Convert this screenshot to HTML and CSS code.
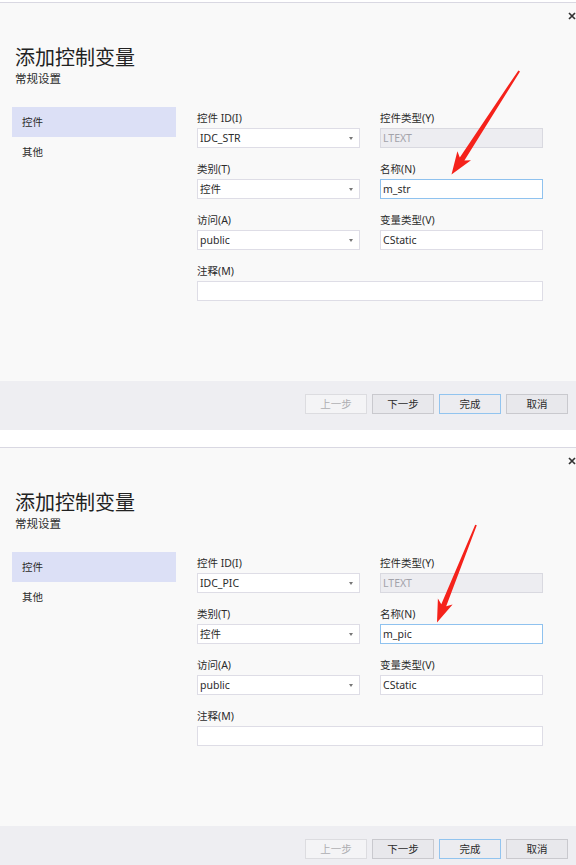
FILE: index.html
```html
<!DOCTYPE html>
<html lang="zh-CN">
<head>
<meta charset="utf-8">
<title>添加控制变量</title>
<link rel="stylesheet" href="styles.css">
</head>
<body>
<div class="shot">
  <div class="dialog">
    <div class="titlebar">
      <span class="close"><svg width="8" height="8" viewBox="0 0 8 8"><path d="M1 1L7 7M7 1L1 7" stroke="#333" stroke-width="1.7"/></svg></span>
    </div>
    <header class="head">
      <h1 class="title">添加控制变量</h1>
      <p class="subtitle">常规设置</p>
    </header>
    <div class="body">
      <nav class="side">
        <div class="nav-item active">控件</div>
        <div class="nav-item">其他</div>
      </nav>
      <div class="form">
        <div class="field">
          <div class="label">控件 ID(I)</div>
          <div class="box select"><span>IDC_STR</span><i class="caret"></i></div>
        </div>
        <div class="field">
          <div class="label">控件类型(Y)</div>
          <div class="box disabled"><span>LTEXT</span></div>
        </div>
        <div class="field">
          <div class="label">类别(T)</div>
          <div class="box select"><span>控件</span><i class="caret"></i></div>
        </div>
        <div class="field">
          <div class="label">名称(N)</div>
          <div class="box focused"><span>m_str</span></div>
        </div>
        <div class="field">
          <div class="label">访问(A)</div>
          <div class="box select"><span>public</span><i class="caret"></i></div>
        </div>
        <div class="field">
          <div class="label">变量类型(V)</div>
          <div class="box"><span>CStatic</span></div>
        </div>
        <div class="field wide">
          <div class="label">注释(M)</div>
          <div class="box"></div>
        </div>
      </div>
    </div>
  </div>
  <footer class="footer">
    <button class="btn disabled">上一步</button>
    <button class="btn">下一步</button>
    <button class="btn primary">完成</button>
    <button class="btn">取消</button>
  </footer>
  <svg class="arrow" width="576" height="445" viewBox="0 0 576 445">
    <path d="M520,71.4 L464.4,160.6 L471,160.2 L451.5,174.5 L457.4,151.2 L459.8,157.4 L518.4,70.4 Z" fill="#f5221b"/>
  </svg>
</div>

<div class="shot">
  <div class="dialog">
    <div class="titlebar">
      <span class="close"><svg width="8" height="8" viewBox="0 0 8 8"><path d="M1 1L7 7M7 1L1 7" stroke="#333" stroke-width="1.7"/></svg></span>
    </div>
    <header class="head">
      <h1 class="title">添加控制变量</h1>
      <p class="subtitle">常规设置</p>
    </header>
    <div class="body">
      <nav class="side">
        <div class="nav-item active">控件</div>
        <div class="nav-item">其他</div>
      </nav>
      <div class="form">
        <div class="field">
          <div class="label">控件 ID(I)</div>
          <div class="box select"><span>IDC_PIC</span><i class="caret"></i></div>
        </div>
        <div class="field">
          <div class="label">控件类型(Y)</div>
          <div class="box disabled"><span>LTEXT</span></div>
        </div>
        <div class="field">
          <div class="label">类别(T)</div>
          <div class="box select"><span>控件</span><i class="caret"></i></div>
        </div>
        <div class="field">
          <div class="label">名称(N)</div>
          <div class="box focused"><span>m_pic</span></div>
        </div>
        <div class="field">
          <div class="label">访问(A)</div>
          <div class="box select"><span>public</span><i class="caret"></i></div>
        </div>
        <div class="field">
          <div class="label">变量类型(V)</div>
          <div class="box"><span>CStatic</span></div>
        </div>
        <div class="field wide">
          <div class="label">注释(M)</div>
          <div class="box"></div>
        </div>
      </div>
    </div>
  </div>
  <footer class="footer">
    <button class="btn disabled">上一步</button>
    <button class="btn">下一步</button>
    <button class="btn primary">完成</button>
    <button class="btn">取消</button>
  </footer>
  <svg class="arrow" width="576" height="445" viewBox="0 0 576 445">
    <path d="M476.8,80.3 L446.2,161.3 L452.6,159.6 L437,177.5 L437.9,153.6 L441.3,159.2 L475.2,79.7 Z" fill="#f5221b"/>
  </svg>
</div>
</body>
</html>
```
FILE: styles.css
```css
html, body {
  margin: 0;
  padding: 0;
  background: #ffffff;
  height: 865px;
  overflow: hidden;
}
body {
  font-family: "Noto Sans", "Noto Sans CJK SC", sans-serif;
  color: #2b2b2b;
}
.shot {
  position: relative;
  height: 445px;
  padding-top: 2px;
  box-sizing: border-box;
}
.dialog {
  height: 379px;
  box-sizing: border-box;
  border-top: 1px solid #d9d8e2;
  background: #f9f9f9;
}
.titlebar {
  height: 24px;
  display: flex;
  justify-content: flex-end;
  align-items: center;
}
.close {
  display: flex;
  width: 8px;
  height: 8px;
  margin-top: 1px;
}
.head {
  padding-left: 15px;
  margin-top: 17px;
}
.title {
  margin: 0;
  font-size: 20px;
  font-weight: normal;
  line-height: 26px;
  color: #222;
  font-family: "Noto Sans CJK SC", sans-serif;
}
.subtitle {
  margin: 0;
  font-size: 11.5px;
  line-height: 16px;
  color: #2b2b2b;
  font-family: "Noto Sans CJK SC", sans-serif;
}
.body {
  display: flex;
  padding-left: 12px;
  margin-top: 21px;
}
.side {
  width: 164px;
  flex: none;
}
.nav-item {
  height: 30px;
  line-height: 30px;
  padding-left: 10px;
  font-size: 10.5px;
  color: #2b2b2b;
}
.nav-item.active {
  background: #dce0f6;
}
.form {
  margin-left: 21px;
  padding-top: 3px;
  display: grid;
  grid-template-columns: 163px 163px;
  column-gap: 20px;
  row-gap: 13px;
  align-content: start;
}
.field.wide {
  grid-column: 1 / span 2;
}
.label {
  font-size: 10.5px;
  line-height: 16px;
  margin-bottom: 2px;
  color: #2b2b2b;
}
.box {
  height: 20px;
  box-sizing: border-box;
  border: 1px solid #dedde6;
  background: #ffffff;
  font-size: 10.5px;
  line-height: 18px;
  padding: 0 2px;
  display: flex;
  align-items: center;
  justify-content: space-between;
  color: #2b2b2b;
}
.box.disabled {
  background: #ededf1;
  border-color: #d9d9e0;
  color: #a3a3aa;
}
.box.focused {
  border-color: #8fc2ef;
}
.caret {
  width: 0;
  height: 0;
  border-left: 2.5px solid transparent;
  border-right: 2.5px solid transparent;
  border-top: 3px solid #777;
  margin-right: 4px;
}
.footer {
  height: 49px;
  box-sizing: border-box;
  background: #eeeef2;
  display: flex;
  justify-content: flex-end;
  align-items: flex-start;
  gap: 5px;
  padding: 13px 8px 0 0;
}
.btn {
  width: 62px;
  height: 20px;
  box-sizing: border-box;
  border: 1px solid #c9c9ce;
  background: #e8e8ec;
  font-family: "Noto Sans CJK SC", sans-serif;
  font-size: 10.5px;
  line-height: 18px;
  padding: 0;
  color: #2b2b2b;
}
.btn.disabled {
  background: #f4f4f6;
  border-color: #dcdce0;
  color: #aeaeb2;
}
.btn.primary {
  border-color: #92c4ef;
  background: #ececf0;
}
.arrow {
  position: absolute;
  left: 0;
  top: 0;
  pointer-events: none;
}
```
